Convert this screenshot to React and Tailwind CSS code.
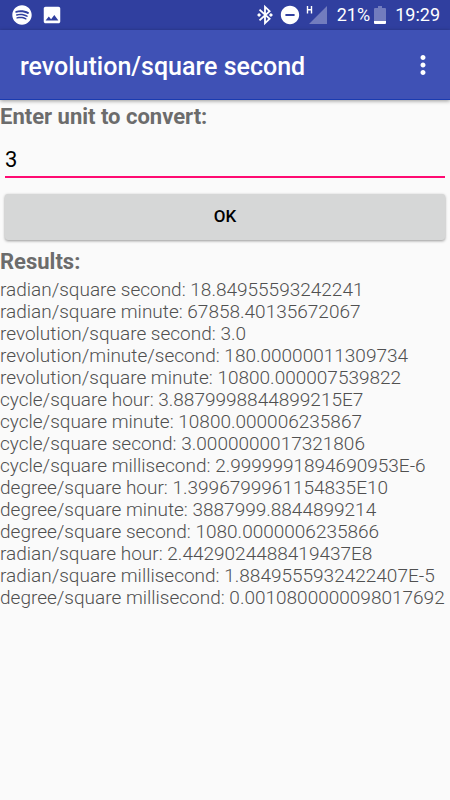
import { useState } from 'react'
import { FaSpotify } from 'react-icons/fa'
import { MdDoNotDisturbOn, MdImage, MdMoreVert } from 'react-icons/md'

const RESULTS = [
  { unit: 'radian/square second', value: '18.84955593242241' },
  { unit: 'radian/square minute', value: '67858.40135672067' },
  { unit: 'revolution/square second', value: '3.0' },
  { unit: 'revolution/minute/second', value: '180.00000011309734' },
  { unit: 'revolution/square minute', value: '10800.000007539822' },
  { unit: 'cycle/square hour', value: '3.8879998844899215E7' },
  { unit: 'cycle/square minute', value: '10800.000006235867' },
  { unit: 'cycle/square second', value: '3.0000000017321806' },
  { unit: 'cycle/square millisecond', value: '2.9999991894690953E-6' },
  { unit: 'degree/square hour', value: '1.3996799961154835E10' },
  { unit: 'degree/square minute', value: '3887999.8844899214' },
  { unit: 'degree/square second', value: '1080.0000006235866' },
  { unit: 'radian/square hour', value: '2.4429024488419437E8' },
  { unit: 'radian/square millisecond', value: '1.8849555932422407E-5' },
  { unit: 'degree/square millisecond', value: '0.0010800000098017692' },
]

function BluetoothIcon() {
  return (
    <svg viewBox="0 0 24 24" className="w-[22px] h-[22px]" aria-hidden="true">
      <path d="M6 6.2l11 10-5 4.600V3.200l5 4.600-11 10" stroke="#fff" strokeWidth="2" fill="none" />
      <path d="M5.500 9.800L3.300 12l2.200 2.200L7.700 12zM18.500 9.800L16.300 12l2.200 2.200 2.200-2.200z" fill="#fff" />
    </svg>
  )
}

function SignalIcon() {
  return (
    <svg viewBox="0 0 22 20" className="w-[22px] h-5" aria-hidden="true">
      <path d="M21 1v18H3z" fill="#fff" fillOpacity="0.32" />
      <path d="M1.5 1v7.5M5.5 1v7.5M1.5 4.7h4" stroke="#fff" strokeWidth="1.4" fill="none" />
    </svg>
  )
}

function BatteryIcon() {
  return (
    <svg viewBox="0 0 12 19" className="w-3 h-[19px]" aria-hidden="true">
      <path d="M4 0h4v2h3q1 0 1 1v12H0V3q0-1 1-1h3z" fill="#fff" fillOpacity="0.32" />
      <path d="M0 15h12v2q0 1-1 1H1q-1 0-1-1z" fill="#fff" />
    </svg>
  )
}

function StatusBar() {
  return (
    <div className="flex h-[30px] items-center justify-between bg-[#303f9f] pl-3 pr-[10px] text-white">
      <div className="flex items-center gap-[9px]">
        <FaSpotify className="w-5 h-5" />
        <MdImage className="w-[22px] h-[22px]" />
      </div>
      <div className="flex items-center text-lg leading-5">
        <BluetoothIcon />
        <MdDoNotDisturbOn className="ml-[3px] mr-[5px] w-[22px] h-[22px]" />
        <SignalIcon />
        <span className="ml-[9px] mr-1">21%</span>
        <BatteryIcon />
        <span className="ml-[9px]">19:29</span>
      </div>
    </div>
  )
}

export default function App() {
  const [amount, setAmount] = useState('3')

  return (
    <div className="min-h-screen bg-[#fafafa] font-['Roboto',sans-serif] text-[#6c6c6c]">
      <StatusBar />

      {/* Toolbar */}
      <header className="flex h-[70px] items-center justify-between border-b border-[#1a3bb0] bg-[#3f51b5] pl-5 pr-3 text-white shadow-[0_1px_4px_rgba(0,0,0,0.4)]">
        <h1 className="pt-1 text-[25px] leading-[30px] font-medium">revolution/square second</h1>
        <button type="button" aria-label="More options">
          <MdMoreVert className="w-[30px] h-[30px]" />
        </button>
      </header>

      <main>
        <form onSubmit={e => e.preventDefault()}>
          <label htmlFor="amount" className="block pt-1 text-[22px] leading-[26px] font-bold">
            Enter unit to convert:
          </label>
          <div className="px-[5px] pt-3">
            <input
              id="amount"
              type="text"
              inputMode="decimal"
              value={amount}
              onChange={e => setAmount(e.target.value)}
              className="block h-9 w-full border-b-2 border-[#ff0a72] text-[22px] leading-[26px] text-black outline-none"
            />
            <button
              type="submit"
              className="mt-4 block h-[46px] w-full rounded-[3px] bg-[#d6d7d7] text-[17px] font-medium text-black shadow-[0_1px_3px_rgba(0,0,0,0.4)]"
            >
              OK
            </button>
          </div>
        </form>

        <h2 className="pt-[9px] text-[22px] leading-[26px] font-bold">Results:</h2>
        <ul className="pt-1 text-[19px] leading-[22px] font-[350] text-[#505050]">
          {RESULTS.map(r => (
            <li key={r.unit} className="whitespace-nowrap">{r.unit}: {r.value}</li>
          ))}
        </ul>
      </main>
    </div>
  )
}
